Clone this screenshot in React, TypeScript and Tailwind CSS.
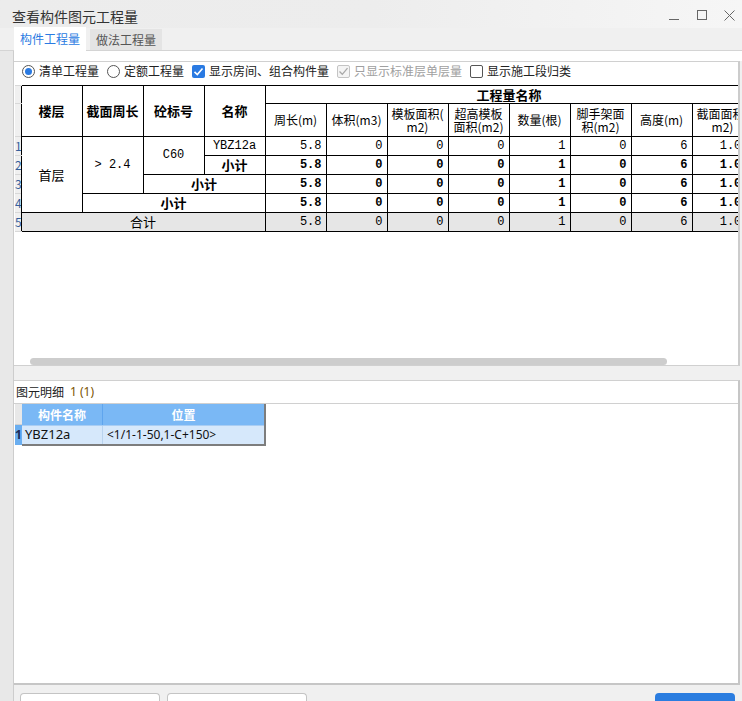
import React from "react";

const mono = "font-['Liberation_Mono','Noto_Sans_CJK_SC',monospace]";
const cjk = "font-['Noto_Sans_CJK_SC',sans-serif]";

function Radio({ checked, label }: { checked?: boolean; label: string }) {
  return (
    <div className="flex items-center gap-[4px]">
      <div className="w-[13px] h-[13px] rounded-full border border-[#555] bg-white flex items-center justify-center">
        {checked && <div className="w-[7px] h-[7px] rounded-full bg-[#2a7ae2]" />}
      </div>
      <span className="text-[12px] leading-[14px] text-[#222]">{label}</span>
    </div>
  );
}

function Check({ state, label }: { state: "on" | "off" | "dis"; label: string }) {
  return (
    <div className="flex items-center gap-[4px]">
      {state === "on" && (
        <div className="w-[13px] h-[13px] rounded-[2px] bg-[#2a7ae2] flex items-center justify-center">
          <svg width="11" height="11" viewBox="0 0 11 11">
            <path d="M1.5 5.8 L4.3 8.5 L9.5 2.5" stroke="white" strokeWidth="1.6" fill="none" />
          </svg>
        </div>
      )}
      {state === "dis" && (
        <div className="w-[13px] h-[13px] rounded-[2px] border border-[#c4c4c4] bg-[#f4f4f4] flex items-center justify-center">
          <svg width="11" height="11" viewBox="0 0 11 11">
            <path d="M1.5 5.5 L4.3 8.3 L9.5 2.2" stroke="#a8a8a8" strokeWidth="1.3" fill="none" />
          </svg>
        </div>
      )}
      {state === "off" && <div className="w-[13px] h-[13px] rounded-[2px] border border-[#555] bg-white" />}
      <span className={`text-[12px] leading-[14px] ${state === "dis" ? "text-[#a0a0a0]" : "text-[#222]"}`}>{label}</span>
    </div>
  );
}

const th = "border border-black font-bold text-[13px] leading-[15px] text-black text-center align-middle p-0";
const sh = "border border-black font-normal text-[12px] leading-[13px] text-black text-center align-middle p-0 overflow-hidden whitespace-nowrap";
const rn = "border-0 border-b border-[#d8d8d8] bg-[#f0f0f0] p-0 text-[12px] leading-[14px] text-[#35609c] text-left overflow-hidden";

function Nums({ vals, bold, gray }: { vals: string[]; bold?: boolean; gray?: boolean }) {
  return (
    <>
      {vals.map((v, i) => (
        <td
          key={i}
          className={`border border-black text-right pr-[4px] pl-0 py-0 text-[12px] leading-[14px] whitespace-nowrap overflow-hidden ${mono} ${bold ? "font-bold" : "font-normal"} ${gray ? "bg-[#e6e6e6]" : ""}`}
        >
          {v}
        </td>
      ))}
    </>
  );
}

export default function App() {
  const nv = ["5.8", "0", "0", "0", "1", "0", "6", "1.08"];
  return (
    <div className={`w-[742px] h-[701px] bg-[#f0f0f0] flex flex-col overflow-hidden ${cjk}`}>
      {/* title bar */}
      <div className="h-[28px] shrink-0 flex items-center bg-gradient-to-r from-[#ececec] via-[#ededed] to-[#f6f6f6]">
        <span className="pl-[12px] text-[14px] leading-[16px] text-[#333] mt-[4px]">查看构件图元工程量</span>
        <div className="ml-auto flex items-center mt-[2px]">
          <div className="w-[28px] flex justify-center">
            <div className="w-[10px] h-[1px] bg-[#666] mt-[8px]" />
          </div>
          <div className="w-[28px] flex justify-center">
            <div className="w-[10px] h-[10px] border border-[#666]" />
          </div>
          <div className="w-[26px] flex justify-center">
            <svg width="11" height="11" viewBox="0 0 11 11">
              <path d="M0.5 0.5 L10.5 10.5 M10.5 0.5 L0.5 10.5" stroke="#666" strokeWidth="1" />
            </svg>
          </div>
        </div>
      </div>
      {/* tabs */}
      <div className="h-[23px] shrink-0 flex items-end pl-[14px] border-b border-[#d4d4d4]">
        <div className="h-[24px] w-[72px] bg-white flex items-center justify-center text-[12px] text-[#2a7ae2] -mb-[1px]">构件工程量</div>
        <div className="h-[21px] w-[72px] ml-[4px] bg-[#e4e4e4] flex items-center justify-center text-[12px] text-[#555]">做法工程量</div>
      </div>
      {/* body */}
      <div className="flex-1 flex min-h-0">
        <div className="w-[14px] shrink-0 bg-[#e8e8e8] border-r border-[#cdcdcd]" />
        <div className="flex-1 min-w-0 flex flex-col">
          <div className="h-[10px] shrink-0 bg-white" />
          {/* panel 1 */}
          <div className="h-[305px] shrink-0 bg-white border-t border-b border-[#d0d0d0] flex flex-col mr-[2px] border-r-2 border-r-[#cccccc]">
            <div className="h-[19px] flex items-center gap-[8px] pl-[8px]">
              <Radio checked label="清单工程量" />
              <Radio label="定额工程量" />
              <Check state="on" label="显示房间、组合构件量" />
              <Check state="dis" label="只显示标准层单层量" />
              <Check state="off" label="显示施工段归类" />
            </div>
            <div className="h-[274px] mt-[4px] overflow-hidden pl-[1px]">
              <table className="border-collapse table-fixed w-[738px]">
                <colgroup>
                  <col className="w-[6px]" />
                  {Array.from({ length: 12 }).map((_, i) => (
                    <col key={i} className="w-[61px]" />
                  ))}
                </colgroup>
                <tbody>
                  <tr className="h-[18px]">
                    <td className={rn + " border-t border-t-[#d8d8d8]"}></td>
                    <th rowSpan={2} className={th}>楼层</th>
                    <th rowSpan={2} className={th}>截面周长</th>
                    <th rowSpan={2} className={th}>砼标号</th>
                    <th rowSpan={2} className={th}>名称</th>
                    <th colSpan={8} className={th}>工程量名称</th>
                  </tr>
                  <tr className="h-[33px]">
                    <td className={rn}></td>
                    <th className={sh}>周长(m)</th>
                    <th className={sh}>体积(m3)</th>
                    <th className={sh}>模板面积(<br />m2)</th>
                    <th className={sh}>超高模板<br />面积(m2)</th>
                    <th className={sh}>数量(根)</th>
                    <th className={sh}>脚手架面<br />积(m2)</th>
                    <th className={sh}>高度(m)</th>
                    <th className={sh}>截面面积(<br />m2)</th>
                  </tr>
                  <tr className="h-[19px]">
                    <td className={rn}>1</td>
                    <td rowSpan={4} className="border border-black text-center text-[13px] p-0">首层</td>
                    <td rowSpan={3} className={`border border-black text-center text-[12px] p-0 ${mono}`}>&gt; 2.4</td>
                    <td rowSpan={2} className={`border border-black text-center text-[12px] p-0 ${mono}`}>C60</td>
                    <td className={`border border-black text-center text-[12px] leading-[14px] p-0 ${mono}`}>YBZ12a</td>
                    <Nums vals={nv} />
                  </tr>
                  <tr className="h-[19px]">
                    <td className={rn}>2</td>
                    <td className="border border-black text-center text-[13px] leading-[14px] font-bold p-0">小计</td>
                    <Nums vals={nv} bold />
                  </tr>
                  <tr className="h-[19px]">
                    <td className={rn}>3</td>
                    <td colSpan={2} className="border border-black text-center text-[13px] leading-[14px] font-bold p-0">小计</td>
                    <Nums vals={nv} bold />
                  </tr>
                  <tr className="h-[19px]">
                    <td className={rn}>4</td>
                    <td colSpan={3} className="border border-black text-center text-[13px] leading-[14px] font-bold p-0">小计</td>
                    <Nums vals={nv} bold />
                  </tr>
                  <tr className="h-[19px]">
                    <td className={rn}>5</td>
                    <td colSpan={4} className="border border-black text-center text-[13px] leading-[14px] p-0 bg-[#e6e6e6]">合计</td>
                    <Nums vals={nv} gray />
                  </tr>
                </tbody>
              </table>
            </div>
            <div className="h-[7px] ml-[16px] w-[637px] rounded-full bg-[#cdcdcd]" />
          </div>
          <div className="h-[14px] shrink-0 bg-[#f0f0f0]" />
          {/* panel 2 */}
          <div className="flex-1 min-h-0 bg-white border-t border-[#d0d0d0] border-b-2 border-b-[#c6c6c6] mr-[2px] border-r-2 border-r-[#c6c6c6] flex flex-col">
            <div className="h-[23px] flex items-center pl-[2px] border-b border-[#d0d0d0] text-[12px]">
              <span className="text-[#222]">图元明细</span>
              <span className="ml-[6px] text-[#7a5200] font-['Noto_Sans',sans-serif]">1 (1)</span>
            </div>
            <div className="pl-[1px]">
              <div className="flex w-[251px]">
                <div className="w-[7px] flex flex-col">
                  <div className="h-[21px] bg-[#e8e8e8] border-b border-[#d0d0d0]" />
                  <div className="h-[20px] bg-[#6aaef0] text-[12px] leading-[20px] text-[#1a2a55] font-bold font-['Noto_Sans',sans-serif] overflow-hidden">1</div>
                </div>
                <div className="flex-1 flex flex-col border-r-2 border-b-2 border-[#7d7d7d]">
                  <div className="h-[21px] flex bg-[#7ab8f5] text-white font-bold text-[12px]">
                    <div className="w-[81px] flex items-center justify-center border-r border-[#5fa5ee]">构件名称</div>
                    <div className="flex-1 flex items-center justify-center">位置</div>
                  </div>
                  <div className="h-[19px] flex bg-[#d6e8fb] text-[13px] text-[#111] font-['Noto_Sans',sans-serif] border-t border-[#a9cdf3]">
                    <div className="w-[81px] flex items-center pl-[3px] border-r border-[#b9d3ee]">YBZ12a</div>
                    <div className="flex-1 flex items-center pl-[4px] text-[12px]">&lt;1/1-1-50,1-C+150&gt;</div>
                  </div>
                </div>
              </div>
            </div>
          </div>
          {/* buttons */}
          <div className="h-[16px] shrink-0 flex items-start pt-[8px] pl-[6px] pr-[7px]">
            <div className="w-[140px] h-[14px] bg-white border border-[#c4c4c4] border-b-0 rounded-t-[4px]" />
            <div className="w-[140px] h-[14px] ml-[7px] bg-white border border-[#c4c4c4] border-b-0 rounded-t-[4px]" />
            <div className="ml-auto w-[80px] h-[14px] bg-[#2b7de0] rounded-t-[4px]" />
          </div>
        </div>
      </div>
    </div>
  );
}
